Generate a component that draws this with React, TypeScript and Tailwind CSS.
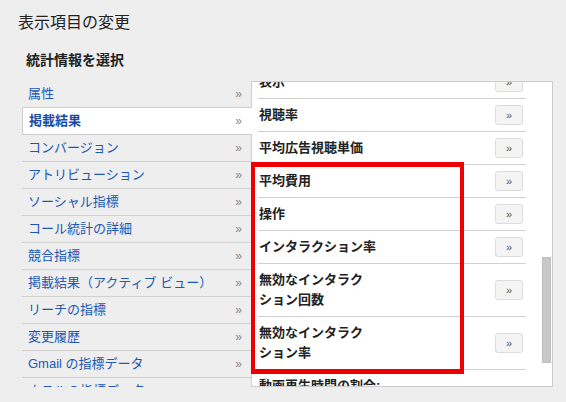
import React from "react";

const leftItems = [
  "属性",
  "掲載結果",
  "コンバージョン",
  "アトリビューション",
  "ソーシャル指標",
  "コール統計の詳細",
  "競合指標",
  "掲載結果（アクティブ ビュー）",
  "リーチの指標",
  "変更履歴",
  "Gmail の指標データ",
  "ホテルの指標データ",
];

const rightItems = [
  "表示",
  "視聴率",
  "平均広告視聴単価",
  "平均費用",
  "操作",
  "インタラクション率",
  "無効なインタラク\nション回数",
  "無効なインタラク\nション率",
  "動画再生時間の割合: 25%",
];

export default function App() {
  return (
    <div
      className="relative w-[566px] h-[402px] overflow-hidden bg-[#eeeeee] text-[#222]"
      style={{ fontFamily: '"Liberation Sans", "Noto Sans CJK JP", sans-serif' }}
    >
      <div className="pl-[18px] pt-[13px] text-[16px] leading-[20px]">表示項目の変更</div>
      <div className="pl-[26px] mt-[17px] text-[14px] leading-[20px] font-bold">統計情報を選択</div>
      <div className="mt-[11px] pl-[22px] flex">
        <div className="w-[230px] h-[306px] overflow-hidden flex flex-col">
          {leftItems.map((t, i) => {
            const sel = i === 1;
            return (
              <div
                key={i}
                className={
                  sel
                    ? "shrink-0 h-[27px] flex items-center bg-white border-l border-b border-[#cccccc] pl-[6px] pr-[10px]"
                    : "shrink-0 h-[27px] flex items-center border-b border-r border-[#d0d0d0] pl-[6px] pr-[9px]"
                }
              >
                <span
                  className={
                    sel
                      ? "flex-1 text-[13px] leading-[20px] font-bold text-[#1b4aa6]"
                      : "flex-1 text-[13px] leading-[20px] text-[#2057b3]"
                  }
                >
                  {t}
                </span>
                <span className="text-[12px] leading-[20px] text-[#888]">»</span>
              </div>
            );
          })}
        </div>
        <div className="w-[301px] h-[306px] overflow-hidden bg-white border-t border-r border-b border-[#cccccc] flex">
          <div className="ml-[6px] w-[268px] mt-[-16px] flex flex-col">
            {rightItems.map((t, i) => (
              <div
                key={i}
                className="shrink-0 flex items-center border-b border-[#d0d0d0] pt-[6px] pb-[6px] pl-px"
              >
                <span className="w-[125px] whitespace-pre-line text-[13px] leading-[20px] font-bold text-[#222]">
                  {t}
                </span>
                <span className="flex-1" />
                <span className="mr-[3px] w-[28px] h-[20px] flex items-center justify-center rounded-[3px] border border-[#dcdcdc] bg-[#f4f4f4] text-[11px] text-[#555]">
                  »
                </span>
              </div>
            ))}
          </div>
          <div className="ml-[16px] w-[9px] flex flex-col">
            <div className="mt-[175px] h-[106px] bg-[#c8c8c8] border border-[#bfbfbf]" />
          </div>
        </div>
      </div>
      <div className="absolute left-[251px] top-[162px] w-[213px] h-[212px] border-x-4 border-y-[5px] border-[#ee0000]" />
    </div>
  );
}
